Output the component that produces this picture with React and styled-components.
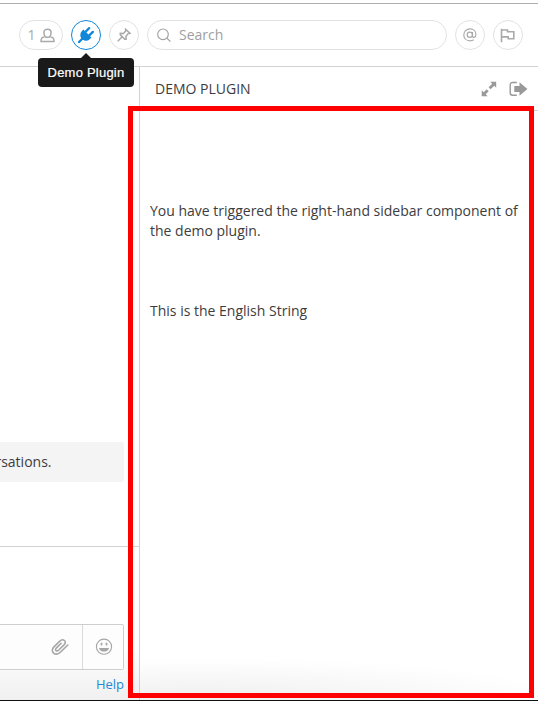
import React from 'react';
import styled, { createGlobalStyle } from 'styled-components';

const GlobalStyle = createGlobalStyle`
  * { box-sizing: border-box; }
  html, body { margin: 0; overflow: hidden; }
  body { font: 14px/20px "Open Sans", sans-serif; color: #3d3c40; background: #fff; }
  svg { display: block; }
`;

const Screen = styled.div`
  position: relative;
  width: 538px;
  height: 701px;
  display: flex;
  flex-direction: column;
  border-bottom: 1px solid #111;
  background: #fff;
  overflow: hidden;
`;

const ChannelHeader = styled.header`
  flex: none;
  display: flex;
  gap: 8px;
  height: 64px;
  margin-top: 3px;
  padding: 16px 15px 0 19px;
  border-top: 1px solid #aeaeae;
  border-bottom: 1px solid #d2d2d2;
`;

const HeaderButton = styled.button`
  position: relative;
  flex: none;
  display: flex;
  align-items: center;
  justify-content: center;
  gap: 4px;
  width: ${({ $wide }) => ($wide ? 44 : 30)}px;
  height: 30px;
  padding: 0;
  border: 1px solid ${({ $active }) => ($active ? '#1187d8' : '#e2e2e2')};
  border-radius: 15px;
  background: #fff;
  color: ${({ $active }) => ($active ? '#1187d8' : '#a9a9a9')};
  font: 14px/20px "Open Sans", sans-serif;
`;

const SearchBar = styled.div`
  flex: 1;
  display: flex;
  align-items: center;
  gap: 7px;
  height: 30px;
  padding-left: 9px;
  border: 1px solid #e2e2e2;
  border-radius: 15px;
  color: #a0a0a0;
`;

const Tooltip = styled.div`
  position: absolute;
  top: 37px;
  left: -34px;
  z-index: 2;
  width: 96px;
  height: 29px;
  border-radius: 4px;
  background: #1a1a1a;
  color: #fff;
  font: 13px/29px "Liberation Sans", Arial, sans-serif;
  letter-spacing: 0.22px;
  -webkit-text-stroke: 0.2px #fff;
  white-space: nowrap;
  text-align: center;
  &::before {
    content: "";
    position: absolute;
    top: -5px;
    left: 43px;
    border: 5px solid transparent;
    border-top: 0;
    border-bottom-color: #1a1a1a;
  }
`;

const Columns = styled.div`
  flex: 1;
  display: flex;
  min-height: 0;
`;

const Channel = styled.main`
  flex: none;
  display: flex;
  flex-direction: column;
  width: 139px;
`;

const PostList = styled.section`
  flex: none;
  display: flex;
  flex-direction: column;
  justify-content: flex-end;
  height: 480px;
  padding: 0 15px 64px 0;
  border-bottom: 1px solid #d2d2d2;
`;

const Notice = styled.div`
  display: flex;
  justify-content: flex-end;
  height: 40px;
  padding: 10px 72.5px 10px 0;
  border-radius: 0 3px 3px 0;
  background: #f4f4f4;
  white-space: nowrap;
  overflow: hidden;
`;

const Composer = styled.section`
  flex: 1;
  padding: 77px 15px 0 0;
  background: linear-gradient(#fff 65%, #f0f0f0);
`;

const MessageBox = styled.div`
  display: flex;
  justify-content: flex-end;
  height: 46px;
  border: 1px solid #cecece;
  border-left: 0;
  border-radius: 0 2px 2px 0;
  background: #fdfdfd;
  color: #a6a6a6;
`;

const ComposerAction = styled.div`
  display: flex;
  align-items: center;
  justify-content: center;
  width: ${({ $divided }) => ($divided ? 41 : 44)}px;
  padding-left: ${({ $divided }) => ($divided ? 2 : 0)}px;
  border-left: ${({ $divided }) => ($divided ? '1px solid #dadada' : '0')};
`;

const HelpLink = styled.a`
  display: block;
  padding-top: 4px;
  color: #2389d7;
  font-size: 13px;
  text-align: right;
`;

const Sidebar = styled.aside`
  flex: 1;
  border-left: 1px solid #d2d2d2;
  background: radial-gradient(ellipse 370px 42px at 60px 100%, #efefef, #fff);
`;

const SidebarHeader = styled.div`
  display: flex;
  align-items: center;
  height: 44px;
  padding: 0 10px 0 15px;
  border-bottom: 1px solid #d2d2d2;
  background: #fff;
`;

const SidebarTitle = styled.h2`
  flex: 1;
  margin: 0;
  font-size: 14px;
  font-weight: 400;
`;

const SidebarActions = styled.div`
  display: flex;
  align-items: center;
  gap: 12px;
  color: #999;
`;

const SidebarBody = styled.div`
  padding: 90px 10px 0;
`;

const Paragraph = styled.p`
  margin: 0 0 60px;
`;

const Highlight = styled.div`
  position: absolute;
  top: 106px;
  left: 128px;
  width: 406px;
  height: 592px;
  border: 5px solid #f00;
  pointer-events: none;
`;

const Line = styled.svg`
  fill: none;
  stroke: currentColor;
  stroke-width: ${({ $weight }) => $weight || 1.4};
`;

const MemberIcon = () => (
  <Line width="15" height="15" viewBox="0 0 15 15" $weight={1.5}>
    <path d="M5.3 8.7C4.3 7.6 3.9 6.4 3.9 4.6 3.9 2.3 5.3 1.2 7.5 1.2s3.6 1.1 3.6 3.4c0 1.8-.4 3-1.4 4.1-.7.8-3.7.8-4.4 0z" />
    <path d="M4.5 8.9 2 9.8c-.8.4-1 1.3-1 3.7h13c0-2.4-.2-3.3-1-3.7l-2.5-.9" />
  </Line>
);

const PlugIcon = () => (
  <svg width="16" height="16" viewBox="0 0 1792 1792" fill="currentColor">
    <path d="M1755 453q37 38 37 90.5t-37 90.5l-401 400 150 150-160 160q-163 163-389.5 186.5t-411.5-100.5l-362 362h-181v-181l362-362q-124-185-100.5-411.5t186.5-389.5l160-160 150 150 400-401q38-37 91-37t90 37 37 90.5-37 90.5l-400 401 234 234 401-400q38-37 91-37t90 37z" />
  </svg>
);

const PinIcon = () => (
  <Line width="14" height="14" viewBox="0 0 14 14" $weight={1.5}>
    <path d="m8.6 1.2 4.5 4.2-2 .2-2.1 2.7.1 3-1.3-.1-4.6-4.6.1-1.2 3.1.2L8.7 3zM5.2 8.8.7 13.3" />
  </Line>
);

const SearchIcon = () => (
  <Line width="15" height="15" viewBox="0 0 15 15" $weight={1.15}>
    <circle cx="6" cy="6.3" r="5.3" />
    <path d="m9.8 10.2 3.6 3.3" />
  </Line>
);

const MentionIcon = () => (
  <Line width="14" height="14" viewBox="0 0 14 14" $weight={1.15}>
    <circle cx="6.8" cy="6.7" r="2.6" />
    <path d="M9.5 4.1v4c0 2.1 3.4 1.7 3.4-1.6C12.9 3 10.3.9 7 .9 3.4.9.8 3.4.8 6.9c0 3.6 2.6 5.9 6.1 5.9 1.5 0 2.8-.3 3.9-1" />
  </Line>
);

const FlagIcon = () => (
  <Line width="16" height="15" viewBox="0 0 16 15" $weight={1.6}>
    <path d="M1.5.8v13.4M1.5 2h6v1.8h6.3v7H8.2V8.9H1.5" />
  </Line>
);

const ExpandIcon = () => (
  <svg width="16" height="16" viewBox="0 0 16 16" fill="currentColor">
    <path d="M9.2.7h6v6l-2-2-3.6 3.6-2-2 3.6-3.6zM.7 15.2v-6l2 2 3-3 2 2-3 3 2 2z" />
  </svg>
);

const ExitIcon = () => (
  <svg width="19" height="16" viewBox="0 0 19 16">
    <path d="M7.8 1.5H3.7Q1.2 1.5 1.2 4v7.8q0 2.5 2.5 2.5h4.1" fill="none" stroke="currentColor" strokeWidth="1.4" />
    <path d="M5.3 4.9h5.2V1.2L18.4 8l-7.9 6.8v-3.7H5.3z" fill="currentColor" />
  </svg>
);

const PaperclipIcon = () => (
  <Line width="18" height="18" viewBox="0 0 18 18" $weight={1.6}>
    <path
      strokeLinecap="round"
      d="m16.8 7-7.2 7c-2.1 2-5 2.7-7 1.1-2.1-1.8-1.4-4.6.6-6.5l5.6-5.4c1.4-1.4 3.2-1.9 4.6-.7s1 3-.4 4.4l-5.2 5.1c-.9.9-2 1.3-2.8.6s-.4-1.8.5-2.7l4.7-4.6"
    />
  </Line>
);

const SmileIcon = () => (
  <svg width="18" height="18" viewBox="0 0 18 18">
    <circle cx="9" cy="8.7" r="7.6" fill="none" stroke="currentColor" strokeWidth="1.1" />
    <ellipse cx="6.5" cy="6" rx="1" ry="1.5" fill="currentColor" />
    <ellipse cx="11.5" cy="6" rx="1" ry="1.5" fill="currentColor" />
    <path d="M4 9.9h10c-.4 2.4-2.4 3.7-5 3.7s-4.6-1.3-5-3.7z" fill="currentColor" />
  </svg>
);

export default function App() {
  return (
    <Screen>
      <GlobalStyle />
      <ChannelHeader>
        <HeaderButton $wide>1<MemberIcon /></HeaderButton>
        <HeaderButton $active>
          <PlugIcon />
          <Tooltip>Demo Plugin</Tooltip>
        </HeaderButton>
        <HeaderButton><PinIcon /></HeaderButton>
        <SearchBar><SearchIcon />Search</SearchBar>
        <HeaderButton><MentionIcon /></HeaderButton>
        <HeaderButton><FlagIcon /></HeaderButton>
      </ChannelHeader>
      <Columns>
        <Channel>
          <PostList><Notice>rsations.</Notice></PostList>
          <Composer>
            <MessageBox>
              <ComposerAction><PaperclipIcon /></ComposerAction>
              <ComposerAction $divided><SmileIcon /></ComposerAction>
            </MessageBox>
            <HelpLink>Help</HelpLink>
          </Composer>
        </Channel>
        <Sidebar>
          <SidebarHeader>
            <SidebarTitle>DEMO PLUGIN</SidebarTitle>
            <SidebarActions><ExpandIcon /><ExitIcon /></SidebarActions>
          </SidebarHeader>
          <SidebarBody>
            <Paragraph>You have triggered the right-hand sidebar component of the demo plugin.</Paragraph>
            <Paragraph>This is the English String</Paragraph>
          </SidebarBody>
        </Sidebar>
      </Columns>
      <Highlight />
    </Screen>
  );
}
